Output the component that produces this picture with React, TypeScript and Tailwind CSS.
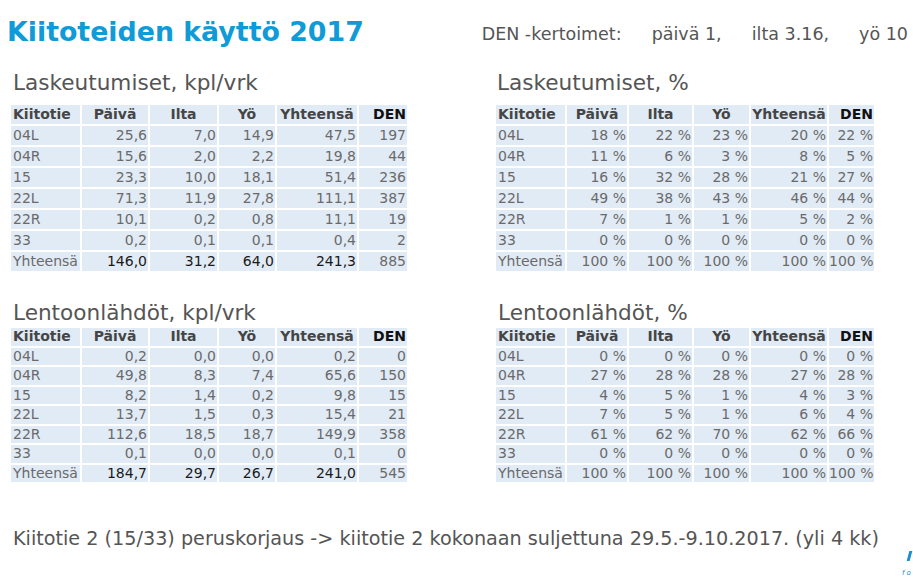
import React from "react";

type Row = [string, string, string, string, string, string];

const t1: Row[] = [
  ["04L", "25,6", "7,0", "14,9", "47,5", "197"],
  ["04R", "15,6", "2,0", "2,2", "19,8", "44"],
  ["15", "23,3", "10,0", "18,1", "51,4", "236"],
  ["22L", "71,3", "11,9", "27,8", "111,1", "387"],
  ["22R", "10,1", "0,2", "0,8", "11,1", "19"],
  ["33", "0,2", "0,1", "0,1", "0,4", "2"],
  ["Yhteensä", "146,0", "31,2", "64,0", "241,3", "885"],
];
const t2: Row[] = [
  ["04L", "18 %", "22 %", "23 %", "20 %", "22 %"],
  ["04R", "11 %", "6 %", "3 %", "8 %", "5 %"],
  ["15", "16 %", "32 %", "28 %", "21 %", "27 %"],
  ["22L", "49 %", "38 %", "43 %", "46 %", "44 %"],
  ["22R", "7 %", "1 %", "1 %", "5 %", "2 %"],
  ["33", "0 %", "0 %", "0 %", "0 %", "0 %"],
  ["Yhteensä", "100 %", "100 %", "100 %", "100 %", "100 %"],
];
const t3: Row[] = [
  ["04L", "0,2", "0,0", "0,0", "0,2", "0"],
  ["04R", "49,8", "8,3", "7,4", "65,6", "150"],
  ["15", "8,2", "1,4", "0,2", "9,8", "15"],
  ["22L", "13,7", "1,5", "0,3", "15,4", "21"],
  ["22R", "112,6", "18,5", "18,7", "149,9", "358"],
  ["33", "0,1", "0,0", "0,0", "0,1", "0"],
  ["Yhteensä", "184,7", "29,7", "26,7", "241,0", "545"],
];
const t4: Row[] = [
  ["04L", "0 %", "0 %", "0 %", "0 %", "0 %"],
  ["04R", "27 %", "28 %", "28 %", "27 %", "28 %"],
  ["15", "4 %", "5 %", "1 %", "4 %", "3 %"],
  ["22L", "7 %", "5 %", "1 %", "6 %", "4 %"],
  ["22R", "61 %", "62 %", "70 %", "62 %", "66 %"],
  ["33", "0 %", "0 %", "0 %", "0 %", "0 %"],
  ["Yhteensä", "100 %", "100 %", "100 %", "100 %", "100 %"],
];

const headers = ["Kiitotie", "Päivä", "Ilta", "Yö", "Yhteensä", "DEN"];

function Table({
  rows,
  wide,
  tall,
  darkTotal,
}: {
  rows: Row[];
  wide: boolean;
  tall: boolean;
  darkTotal: boolean;
}) {
  const gridCls = wide
    ? "grid grid-cols-[69px_66px_67px_56px_80px_48px] gap-x-[2px]"
    : "grid grid-cols-[69px_60px_63px_55px_76px_45px] gap-x-[2px]";
  const rowH = tall ? "h-[19px] leading-[19px]" : "h-[17.5px] leading-[17.5px]";
  return (
    <div className="flex flex-col gap-y-[2px]">
      <div className={gridCls}>
        {headers.map((h, i) => (
          <div
            key={h}
            className={
              rowH +
              " bg-[#e1ebf6] text-[14px] font-bold whitespace-nowrap overflow-hidden " +
              (i === 0
                ? "text-left pl-[2px] text-[#454545]"
                : i === 5
                ? "text-right pr-[1px] text-[#111111]"
                : "text-center text-[#454545]")
            }
          >
            {h}
          </div>
        ))}
      </div>
      {rows.map((r, ri) => {
        const isTotal = ri === rows.length - 1;
        return (
          <div key={ri} className={gridCls}>
            {r.map((c, ci) => (
              <div
                key={ci}
                className={
                  rowH +
                  " bg-[#e1ebf6] text-[14px] whitespace-nowrap overflow-hidden " +
                  (ci === 0 ? "text-left pl-[2px] " : "text-right pr-[1px] ") +
                  (isTotal && darkTotal && ci > 0 && ci < 5
                    ? "text-[#1a1a1a]"
                    : "text-[#6a6a6a]")
                }
              >
                {c}
              </div>
            ))}
          </div>
        );
      })}
    </div>
  );
}

export default function App() {
  return (
    <div
      className="relative w-[913px] h-[587px] bg-white overflow-hidden"
      style={{ fontFamily: '"DejaVu Sans", Verdana, sans-serif' }}
    >
      <div className="flex justify-between pt-[16px] pl-[7px] pr-[5px]">
        <h1 className="text-[26.8px] leading-[32px] font-bold text-[#0e9bd8] whitespace-nowrap">
          Kiitoteiden käyttö 2017
        </h1>
        <div className="mt-[7px] flex gap-[30px] text-[17.5px] leading-[22px] text-[#555555] whitespace-nowrap">
          <span>DEN -kertoimet:</span>
          <span>päivä 1,</span>
          <span>ilta 3.16,</span>
          <span>yö 10</span>
        </div>
      </div>

      <div className="flex pl-[11px] gap-[89px] mt-[22px]">
        <div className="flex flex-col w-[396px]">
          <div className="pl-[2px] text-[21.6px] leading-[25px] text-[#555555] whitespace-nowrap mb-[10px]">
            Laskeutumiset, kpl/vrk
          </div>
          <Table rows={t1} wide tall darkTotal />
          <div className="pl-[2px] text-[21.6px] leading-[25px] text-[#555555] whitespace-nowrap mt-[29px] mb-[3px]">
            Lentoonlähdöt, kpl/vrk
          </div>
          <Table rows={t3} wide tall={false} darkTotal />
        </div>
        <div className="flex flex-col w-[378px]">
          <div className="pl-[1px] text-[21.6px] leading-[25px] text-[#555555] whitespace-nowrap mb-[10px]">
            Laskeutumiset, %
          </div>
          <Table rows={t2} wide={false} tall darkTotal={false} />
          <div className="pl-[2px] text-[21.6px] leading-[25px] text-[#555555] whitespace-nowrap mt-[29px] mb-[3px]">
            Lentoonlähdöt, %
          </div>
          <Table rows={t4} wide={false} tall={false} darkTotal={false} />
        </div>
      </div>

      <div className="mt-[46px] pl-[13px] text-[19.2px] leading-[22px] text-[#555555] whitespace-nowrap">
        Kiitotie 2 (15/33) peruskorjaus -&gt; kiitotie 2 kokonaan suljettuna 29.5.-9.10.2017. (yli 4 kk)
      </div>

      <div className="absolute left-[908px] top-[551px] w-[3px] h-[10px] bg-[#1a8fd0] skew-x-[-15deg]" />
      <div className="absolute left-[902px] top-[568px] text-[7px] italic text-[#1a8fd0] tracking-[2px]">
        fo
      </div>
    </div>
  );
}
